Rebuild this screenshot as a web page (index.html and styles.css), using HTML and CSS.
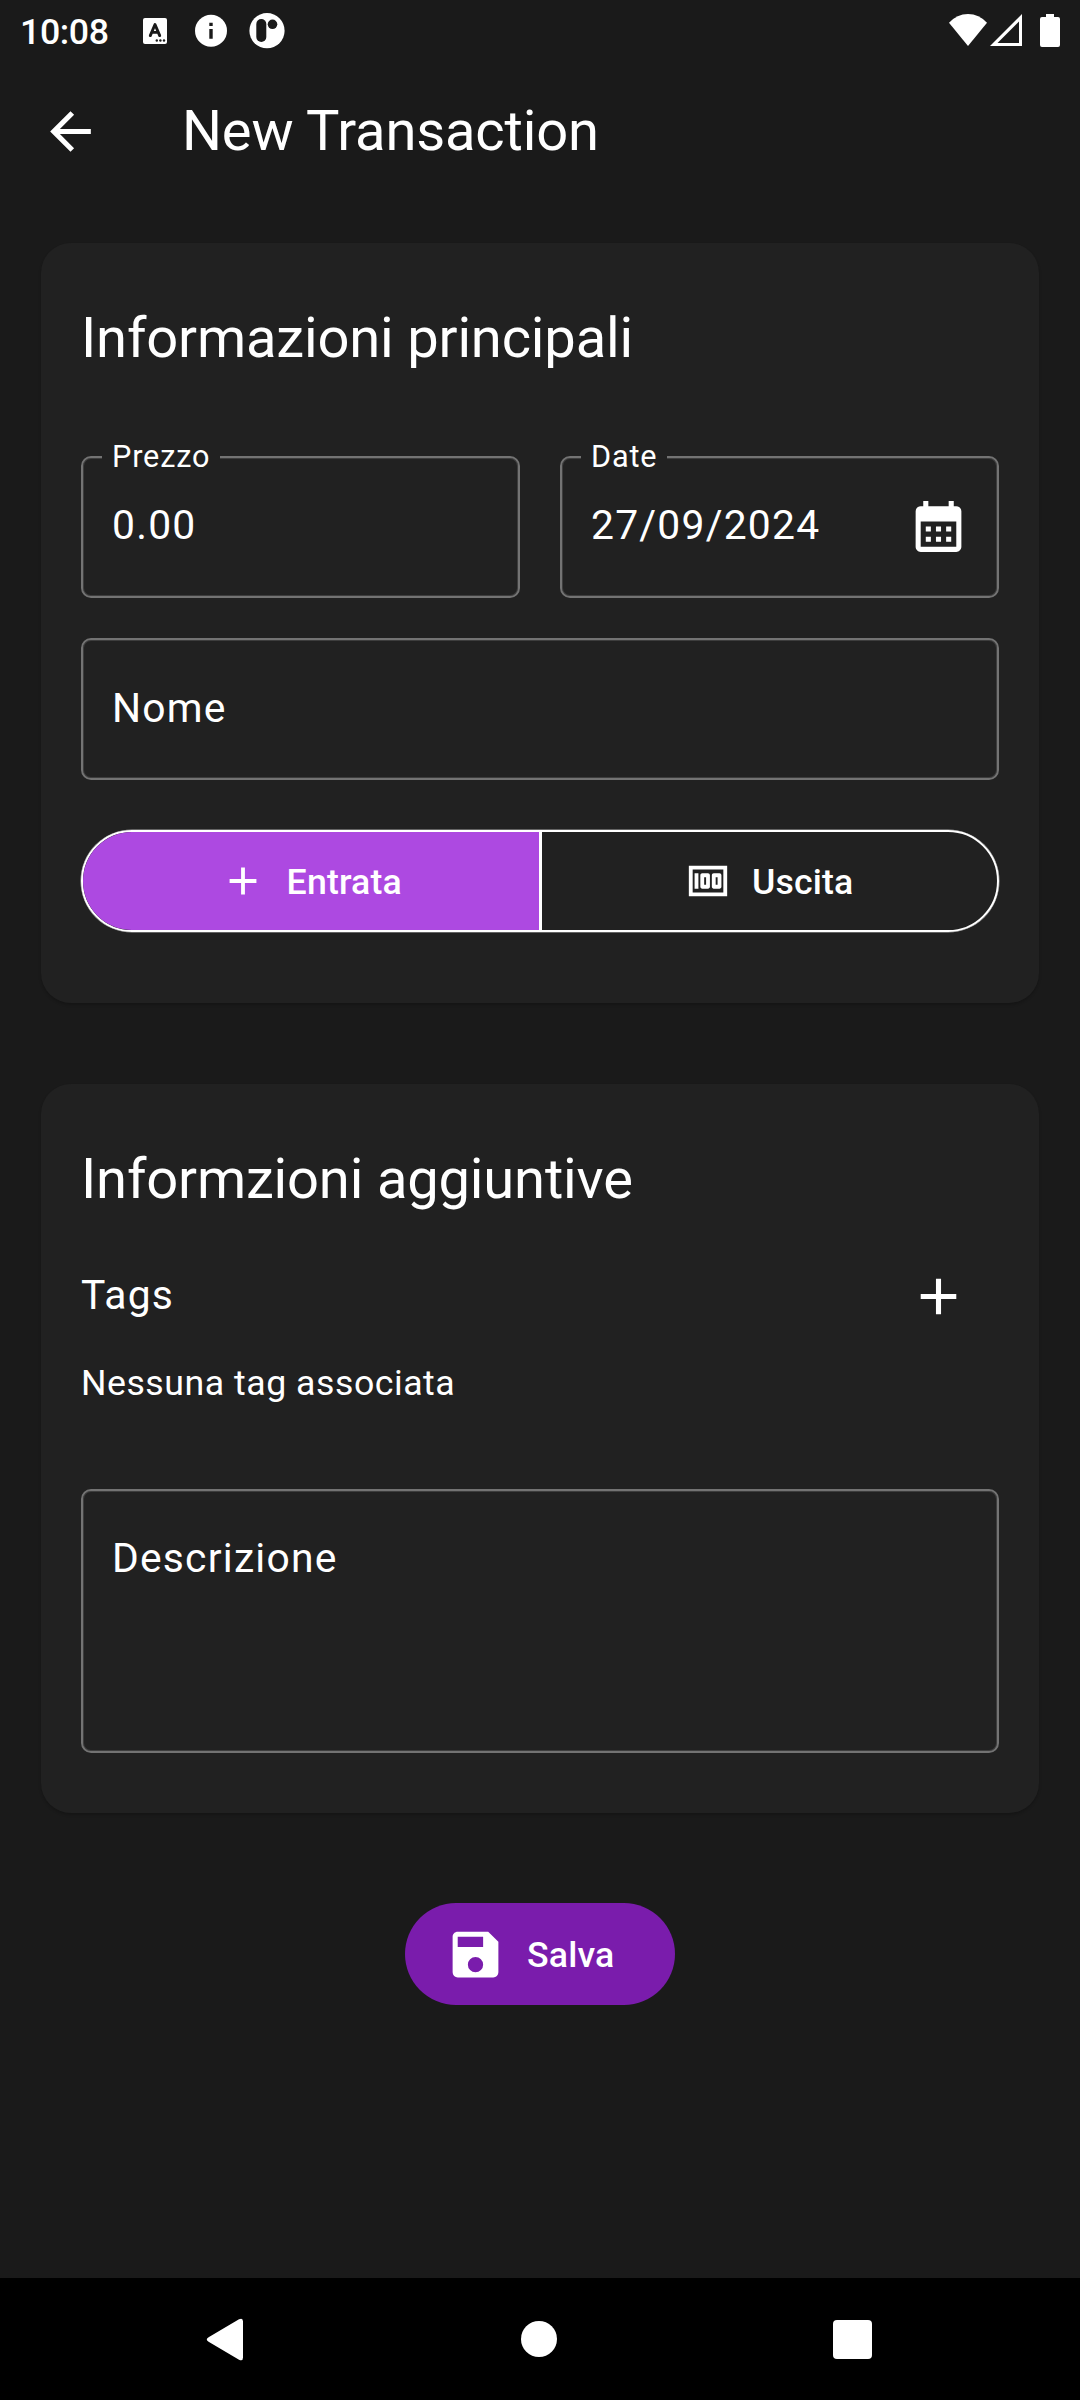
FILE: index.html
```html
<!DOCTYPE html>
<html lang="it">
<head>
<meta charset="utf-8">
<title>New Transaction</title>
<link rel="stylesheet" href="styles.css">
</head>
<body>
<div class="screen">
  <header class="status-bar">
    <span class="clock">10:08</span>
    <div class="notifications">
      <svg width="24" height="60" viewBox="143 0 24 60"><rect x="143" y="18" width="24" height="26" rx="2" fill="#fff"/><path d="M150.3 35.6 155 24.5 159.7 35.6M152 32.4H158" fill="none" stroke="#1a1a1a" stroke-width="2.9" stroke-linecap="round" stroke-linejoin="round"/><g fill="#1a1a1a"><circle cx="156.8" cy="40.5" r="1.2"/><circle cx="160.4" cy="40.5" r="1.2"/><circle cx="164" cy="40.5" r="1.2"/></g></svg>
      <svg width="32" height="60" viewBox="195 0 32 60"><circle cx="211" cy="30.7" r="16" fill="#fff"/><path d="M209.3 22.7h3.4v3.2h-3.4zM209.3 29h3.4v9.7h-3.4z" fill="#1a1a1a"/></svg>
      <svg width="36" height="60" viewBox="249 0 36 60"><circle cx="267" cy="30.7" r="17.6" fill="#fff"/><rect x="256.3" y="19" width="10" height="23" rx="5" fill="#1a1a1a"/><circle cx="272.5" cy="24.3" r="4.8" fill="#1a1a1a"/></svg>
    </div>
    <svg class="signals" width="114" height="60" viewBox="948 0 114 60"><path d="M968 46 949 22.8Q957 14 968 14T987 22.8Z" fill="#fff"/><path d="M990 46 1022 14V46ZM997.5 43H1019V21.5Z" fill="#fff" fill-rule="evenodd"/><path d="M1046 14h8v3h4q2 0 2 2v26q0 2-2 2h-16q-2 0-2-2v-26q0-2 2-2h4z" fill="#fff"/></svg>
  </header>

  <div class="app-bar">
    <svg class="icon" viewBox="0 0 24 24"><path d="M20 11H7.83l5.59-5.59L12 4l-8 8 8 8 1.41-1.41L7.83 13H20v-2z"/></svg>
    <h1 class="title">New Transaction</h1>
  </div>

  <main class="content">
    <section class="card card-main">
      <h2 class="title">Informazioni principali</h2>
      <div class="fields">
        <div class="field labelled">
          <span class="label">Prezzo</span>
          <span class="value">0.00</span>
        </div>
        <div class="field labelled">
          <span class="label">Date</span>
          <span class="value">27/09/2024</span>
          <svg class="icon" viewBox="0 0 24 24"><path d="M19 4h-1V2h-2v2H8V2H6v2H5c-1.11 0-1.99.9-1.99 2L3 20c0 1.1.89 2 2 2h14c1.1 0 2-.9 2-2V6c0-1.1-.9-2-2-2zm0 16H5V10h14v10zM9 14H7v-2h2v2zm4 0h-2v-2h2v2zm4 0h-2v-2h2v2zm-8 4H7v-2h2v2zm4 0h-2v-2h2v2zm4 0h-2v-2h2v2z"/></svg>
        </div>
        <div class="field wide"><span class="value">Nome</span></div>
      </div>
      <div class="toggle">
        <div class="segment selected">
          <svg class="icon small" viewBox="0 0 24 24"><path d="M19 13h-6v6h-2v-6H5v-2h6V5h2v6h6v2z"/></svg>
          <span>Entrata</span>
        </div>
        <div class="segment">
          <svg class="icon small" viewBox="0 0 24 24"><path d="M5 8h2v8H5zm7 0H9c-.55 0-1 .45-1 1v6c0 .55.45 1 1 1h3c.55 0 1-.45 1-1V9c0-.55-.45-1-1-1zm-1 6h-1v-4h1v4zm7-6h-3c-.55 0-1 .45-1 1v6c0 .55.45 1 1 1h3c.55 0 1-.45 1-1V9c0-.55-.45-1-1-1zm-1 6h-1v-4h1v4zM2 4v16h20V4H2zm2 14V6h16v12H4z"/></svg>
          <span>Uscita</span>
        </div>
      </div>
    </section>

    <section class="card card-extra">
      <h2 class="title">Informzioni aggiuntive</h2>
      <div class="tags-row">
        <span class="value">Tags</span>
        <svg class="icon" viewBox="0 0 24 24"><path d="M19 13h-6v6h-2v-6H5v-2h6V5h2v6h6v2z"/></svg>
      </div>
      <p class="empty">Nessuna tag associata</p>
      <div class="field area"><span class="value">Descrizione</span></div>
    </section>

    <div class="save">
      <svg class="icon" viewBox="0 0 24 24"><path d="M15,9H5V5H15M12,19A3,3 0 0,1 9,16A3,3 0 0,1 12,13A3,3 0 0,1 15,16A3,3 0 0,1 12,19M17,3H5C3.89,3 3,3.9 3,5V19A2,2 0 0,0 5,21H19A2,2 0 0,0 21,19V7L17,3Z"/></svg>
      <span>Salva</span>
    </div>
  </main>

  <nav class="nav-bar">
    <svg width="38" height="44" viewBox="206 2317 38 44"><path d="M209 2337 239 2319.3Q243 2317.5 243 2321.5V2357.5Q243 2361.500 239 2359.700L209 2342Q204.500 2339.500 209 2337Z"/></svg>
    <svg width="36" height="36" viewBox="0 0 36 36"><circle cx="18" cy="18" r="18"/></svg>
    <svg width="39" height="39" viewBox="0 0 39 39"><rect width="39" height="39" rx="4"/></svg>
  </nav>
</div>
</body>
</html>
```

FILE: styles.css
```css
* { box-sizing: border-box; margin: 0; padding: 0; }
body {
  background: #1a1a1a;
  color: #fff;
  font-family: Roboto, "Liberation Sans", sans-serif;
}
svg { display: block; flex: none; fill: #fff; }
.screen { display: flex; flex-direction: column; width: 1080px; height: 2400px; }

.status-bar { display: flex; align-items: center; height: 60px; padding: 0 18px 0 20px; }
.clock { width: 123px; font-size: 35.7px; font-weight: 500; letter-spacing: -0.4px; line-height: 42px; padding-top: 3px; }
.notifications { display: flex; }
.notifications svg + svg { margin-left: 28px; }
.notifications svg:last-child { margin-left: 22px; }
.signals { margin-left: auto; }

.app-bar { display: flex; align-items: center; gap: 80px; height: 143px; padding-left: 40px; }
.app-bar .title { padding-left: 1px; }
.icon { width: 61px; height: 61px; }
.icon.small { width: 46px; height: 46px; }
.title { font-size: 56.1px; font-weight: 400; letter-spacing: -0.17px; line-height: 71px; white-space: nowrap; }

.content { display: flex; flex-direction: column; flex: 1; padding: 40px 41px 0; }
.card {
  background: #212121;
  border-radius: 30px;
  padding: 60px 40px 0;
  box-shadow: 0 2px 3px rgba(0, 0, 0, 0.2);
}
.card-main { height: 760px; }
.card-extra { height: 729px; margin-top: 81px; }

.fields { display: grid; grid-template-columns: 1fr 1fr; gap: 40px; margin-top: 82px; }
.field {
  position: relative;
  display: flex;
  align-items: center;
  justify-content: space-between;
  height: 142px;
  padding: 0 28px 0 29px;
  border: 2px solid #737373;
  border-radius: 10px;
  box-shadow: inset 0 0 0 1px rgba(115, 115, 115, 0.35);
}
.labelled { padding-bottom: 2px; }
.wide { grid-column: 1 / -1; }
.value { font-size: 40.8px; letter-spacing: 1.22px; line-height: 48px; }
.field .value { padding-bottom: 2px; }
.label {
  position: absolute;
  top: -19px;
  left: 19px;
  padding: 0 10px;
  background: #212121;
  font-size: 30.6px;
  letter-spacing: 0.85px;
  line-height: 36px;
}

.toggle {
  display: flex;
  height: 102px;
  margin-top: 50px;
  border: 2px solid #fff;
  border-radius: 51px;
  box-shadow: 0 0 0 0.5px rgba(255, 255, 255, 0.6);
  overflow: hidden;
}
.segment {
  display: flex;
  flex: 1;
  align-items: center;
  justify-content: center;
  gap: 21px;
}
.segment span, .save span { padding-top: 2px; }
.selected { background: #ad49e1; border-right: 3px solid #fff; }
.segment, .save { font-size: 35.7px; font-weight: 500; letter-spacing: 0.16px; }

.tags-row { display: flex; align-items: center; justify-content: space-between; height: 61px; margin-top: 51px; padding-right: 30px; }
.tags-row .value { padding-bottom: 3px; }
.empty { margin-top: 31px; font-size: 35.7px; letter-spacing: 0.52px; line-height: 51px; }
.area { height: 264px; align-items: flex-start; margin-top: 80px; padding-top: 43px; }

.save {
  display: flex;
  align-self: center;
  align-items: center;
  gap: 21px;
  width: 270px;
  height: 102px;
  margin-top: 90px;
  padding-left: 40px;
  border-radius: 51px;
  background: #7a1cac;
}

.nav-bar { display: flex; align-items: center; justify-content: space-between; height: 122px; padding: 0 208px 0 206px; background: #000; }
```
